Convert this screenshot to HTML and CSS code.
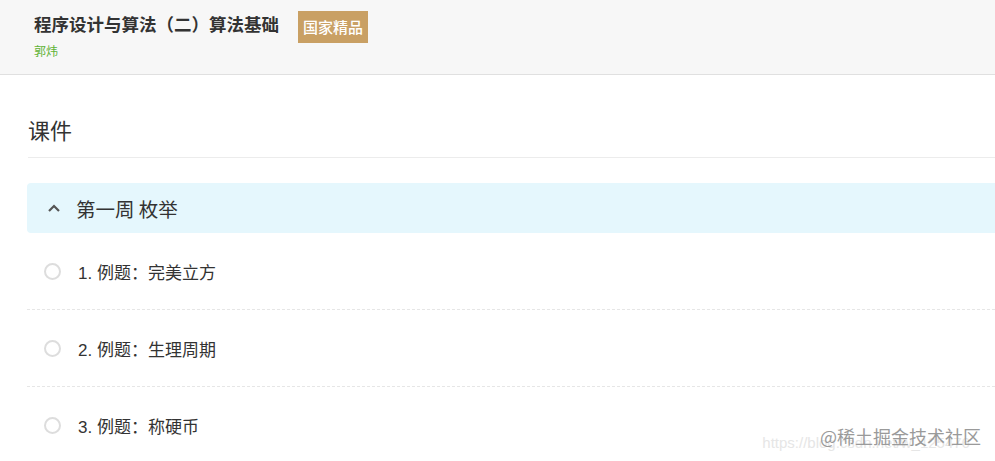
FILE: index.html
```html
<!doctype html>
<html lang="zh-CN">
<head>
    <meta charset="UTF-8">
    <title>程序设计与算法（二）算法基础</title>
    <link rel="stylesheet" href="styles.css">
</head>
<body>
<div class="course-header">
    <div class="course-title-row">
        <h1 class="course-title">程序设计与算法（二）算法基础</h1>
        <span class="course-badge">国家精品</span>
    </div>
    <div class="course-author">郭炜</div>
</div>

<div class="course-content">
    <h2 class="section-title">课件</h2>

    <div class="chapter">
        <div class="chapter-head">
            <svg class="chapter-arrow" width="14" height="10" viewBox="0 0 14 10">
                <path d="M2 8 L7 3 L12 8" fill="none" stroke="#555" stroke-width="2.2"/>
            </svg>
            <span>第一周 枚举</span>
        </div>
        <ul class="lesson-list">
            <li class="lesson"><i class="lesson-dot"></i>1. 例题：完美立方</li>
            <li class="lesson"><i class="lesson-dot"></i>2. 例题：生理周期</li>
            <li class="lesson"><i class="lesson-dot"></i>3. 例题：称硬币</li>
        </ul>
    </div>
</div>

<div class="watermark">
    <span class="wm-url">https://blog.csdn.net/w_125476</span>
    <span class="wm-juejin">@稀土掘金技术社区</span>
</div>
</body>
</html>
```

FILE: styles.css
```css
* {
    margin: 0;
    padding: 0;
}

body {
    position: relative;
    width: 995px;
    height: 461px;
    overflow: hidden;
    background-color: #fff;
    font-family: "Noto Sans CJK SC", "Noto Sans", sans-serif;
    color: #333;
}

.course-header {
    padding: 8px 0 15px 34px;
    background-color: #f7f7f7;
    border-bottom: 1px solid #e0e0e0;
}

.course-title-row {
    display: flex;
    align-items: flex-start;
}

.course-title {
    font-size: 17.5px;
    line-height: 32px;
    font-weight: 700;
    color: #333;
}

.course-badge {
    margin: 3px 0 0 19px;
    padding: 0 5px;
    height: 32px;
    line-height: 32px;
    font-size: 15px;
    font-weight: 500;
    color: #fff;
    background-color: #c9a064;
}

.course-author {
    font-size: 12px;
    line-height: 16px;
    color: #5fb336;
}

.course-content {
    padding: 39px 0 0 28px;
}

.section-title {
    font-size: 22px;
    line-height: 30px;
    font-weight: 400;
    color: #333;
    padding-bottom: 13px;
    border-bottom: 1px solid #ececec;
}

.chapter {
    margin: 25px 0 0 -1px;
}

.chapter-head {
    display: flex;
    align-items: center;
    height: 50px;
    padding-left: 20px;
    background-color: #e5f7fd;
    border-radius: 4px 0 0 4px;
    font-size: 19.5px;
    color: #333;
}

.chapter-arrow {
    margin-right: 15px;
}

.lesson-list {
    list-style: none;
}

.lesson {
    display: flex;
    align-items: center;
    height: 76px;
    padding-left: 17px;
    font-family: "Liberation Sans", "Noto Sans CJK SC", sans-serif;
    font-size: 17px;
    color: #333;
    border-bottom: 1px dashed #e6e6e6;
}

.lesson:last-child {
    border-bottom: none;
}

.lesson-dot {
    width: 13px;
    height: 13px;
    margin-right: 17px;
    border: 2px solid #ddd;
    border-radius: 50%;
}

.watermark {
    position: absolute;
    right: 14px;
    bottom: 12px;
    display: flex;
    align-items: flex-end;
}

.wm-url {
    font-family: "Liberation Sans", sans-serif;
    font-size: 15px;
    color: #e6e6e6;
    margin-right: -150px;
    margin-bottom: -2px;
}

.wm-juejin {
    position: relative;
    font-size: 18px;
    color: #9a9a9a;
}
```
